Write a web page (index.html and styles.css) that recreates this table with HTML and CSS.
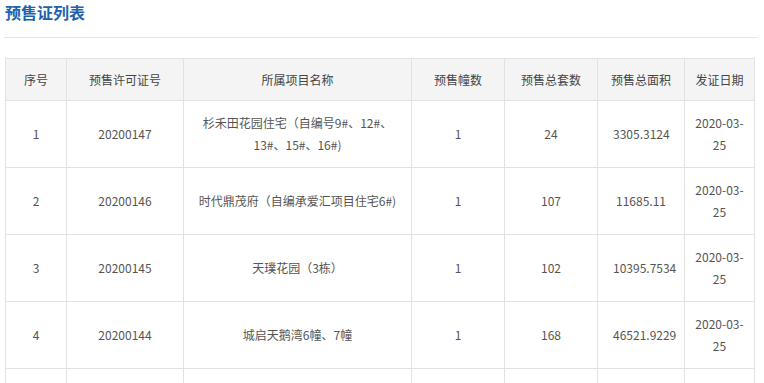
FILE: index.html
```html
<!DOCTYPE html>
<html lang="zh-CN">
<head>
<meta charset="utf-8">
<title>预售证列表</title>
<link rel="stylesheet" href="styles.css">
</head>
<body>
<div class="page">
  <h2 class="title">预售证列表</h2>
  <div class="rule"></div>
  <table class="list">
    <colgroup>
      <col class="c1"><col class="c2"><col class="c3"><col class="c4"><col class="c5"><col class="c6"><col class="c7">
    </colgroup>
    <thead>
      <tr><th>序号</th><th>预售许可证号</th><th>所属项目名称</th><th>预售幢数</th><th>预售总套数</th><th>预售总面积</th><th>发证日期</th></tr>
    </thead>
    <tbody>
      <tr><td>1</td><td>20200147</td><td class="name">杉禾田花园住宅（自编号9#、12#、13#、15#、16#)</td><td>1</td><td>24</td><td>3305.3124</td><td>2020-03-25</td></tr>
      <tr><td>2</td><td>20200146</td><td class="name">时代鼎茂府（自编承爱汇项目住宅6#)</td><td>1</td><td>107</td><td>11685.11</td><td>2020-03-25</td></tr>
      <tr><td>3</td><td>20200145</td><td class="name">天璞花园（3栋）</td><td>1</td><td>102</td><td>10395.7534</td><td>2020-03-25</td></tr>
      <tr><td>4</td><td>20200144</td><td class="name">城启天鹅湾6幢、7幢</td><td>1</td><td>168</td><td>46521.9229</td><td>2020-03-25</td></tr>
      <tr class="more"><td></td><td></td><td class="name"></td><td></td><td></td><td></td><td></td></tr>
    </tbody>
  </table>
</div>
</body>
</html>
```

FILE: styles.css
```css
html, body {
  margin: 0;
  padding: 0;
  background: #fff;
}
body {
  font-family: "Microsoft YaHei", "Noto Sans CJK SC", "Noto Sans", sans-serif;
  font-size: 12px;
  color: #555;
}
.page {
  padding: 0 0 0 4px;
  width: 753px;
}
.title {
  margin: 0;
  padding-left: 1px;
  font-size: 16px;
  line-height: 25px;
  font-weight: bold;
  color: #1c63ad;
}
.rule {
  margin-top: 12px;
  height: 1px;
  background: #e3e3e3;
}
.list {
  margin-top: 20px;
  margin-left: 1px;
  width: 749px;
  border-collapse: collapse;
  table-layout: fixed;
}
.c1 { width: 61px; }
.c2 { width: 117px; }
.c3 { width: 228px; }
.c4 { width: 93px; }
.c5 { width: 93px; }
.c6 { width: 87px; }
.c7 { width: 70px; }
.list th,
.list td {
  border: 1px solid #e2e2e2;
  text-align: center;
  vertical-align: middle;
}
.list th {
  background: #f4f4f4;
  font-weight: normal;
  color: #444;
  padding: 10px 8px;
  line-height: 21px;
}
.list td {
  padding: 11px 15px;
  line-height: 22px;
  color: #555;
}
.list td.name {
  padding: 11px 8px;
}
.list td:last-child {
  padding: 11px 6px;
}
.list tr.more td {
  height: 44px;
}
```
